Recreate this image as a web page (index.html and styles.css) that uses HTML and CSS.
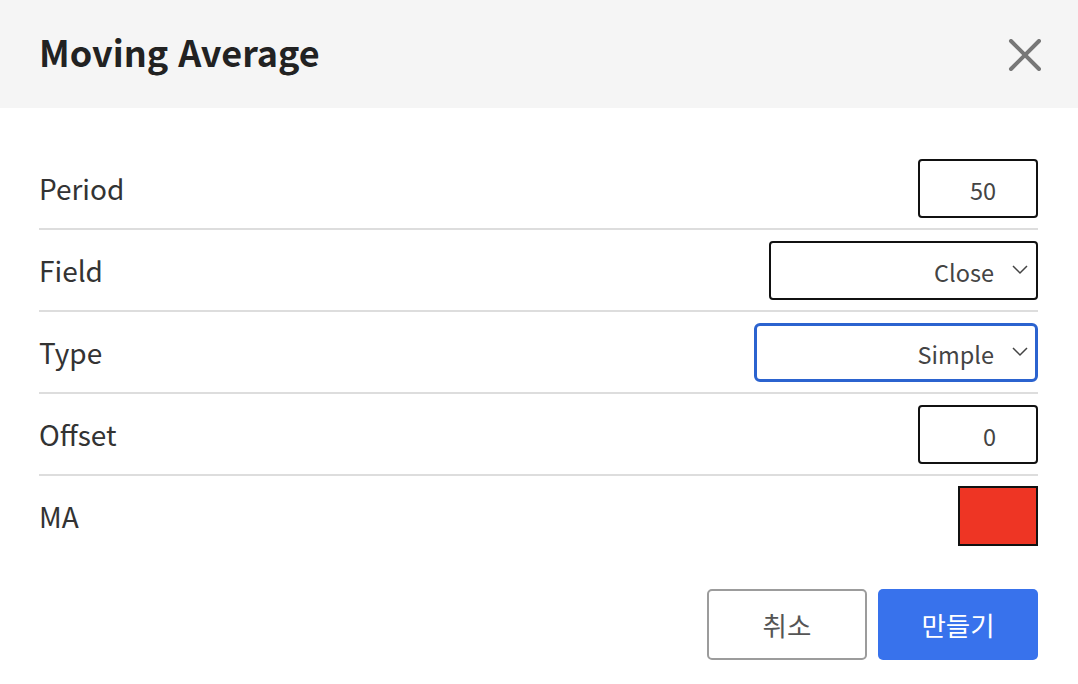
FILE: index.html
```html
<!DOCTYPE html>
<html lang="ko">
<head>
<meta charset="utf-8">
<link rel="stylesheet" href="styles.css">
</head>
<body>
<div class="dialog">
  <header class="head">
    <h1 class="title">Moving Average</h1>
    <button class="close" aria-label="close">
      <svg width="34" height="32" viewBox="0 0 34 32"><path d="M3 2 L31 30 M31 2 L3 30" stroke="#777" stroke-width="4" stroke-linecap="round" fill="none"/></svg>
    </button>
  </header>
  <div class="body">
    <div class="row">
      <span class="label">Period</span>
      <div class="input num"><span class="val">50</span></div>
    </div>
    <div class="row">
      <span class="label">Field</span>
      <div class="input select field"><span class="val">Close</span><svg class="chev" width="16" height="10" viewBox="0 0 16 10"><path d="M1 1 L8 8 L15 1" stroke="#444" stroke-width="1.5" fill="none"/></svg></div>
    </div>
    <div class="row">
      <span class="label">Type</span>
      <div class="input select type"><span class="val">Simple</span><svg class="chev" width="16" height="10" viewBox="0 0 16 10"><path d="M1 1 L8 8 L15 1" stroke="#444" stroke-width="1.5" fill="none"/></svg></div>
    </div>
    <div class="row">
      <span class="label">Offset</span>
      <div class="input num"><span class="val">0</span></div>
    </div>
    <div class="row last">
      <span class="label">MA</span>
      <div class="swatch"></div>
    </div>
    <div class="actions">
      <button class="btn cancel">취소</button>
      <button class="btn create">만들기</button>
    </div>
  </div>
</div>
</body>
</html>
```
FILE: styles.css
```css
html, body { margin: 0; padding: 0; background: #fff; }
body { font-family: "Noto Sans CJK KR", "Noto Sans", sans-serif; width: 1078px; height: 684px; overflow: hidden; }
.head {
  height: 108px; background: #f5f5f5;
  display: flex; align-items: center; justify-content: space-between;
  padding: 0 36px 0 39px; box-sizing: border-box;
}
.title { margin: 0; font-size: 36px; font-weight: 700; color: #222; line-height: 1; position: relative; top: -3px; }
.close { background: none; border: 0; padding: 0; margin: 0; display: flex; cursor: pointer; position: relative; top: 1px; }
.body { padding: 40px 40px 0 39px; }
.row {
  height: 80px; border-bottom: 2px solid #ddd;
  display: flex; align-items: center; justify-content: space-between;
}
.row.last { border-bottom: 0; }
.label { font-size: 28px; color: #333; }
.input {
  box-sizing: border-box; height: 59px; border: 2px solid #111; border-radius: 4px;
  display: flex; align-items: center; justify-content: flex-end;
  font-size: 23.5px; color: #444;
}
.val { position: relative; top: 2px; }
.num { width: 120px; padding-right: 40px; }
.select { padding-right: 8px; }
.select .chev { margin-left: 18px; }
.field { width: 269px; }
.type { width: 284px; border: 3px solid #2b63cf; border-radius: 6px; padding-right: 7px; }
.swatch { width: 80px; height: 60px; box-sizing: border-box; border: 2px solid #111; background: #ee3524; }
.actions { display: flex; justify-content: flex-end; gap: 11px; margin-top: 33px; }
.btn {
  width: 160px; height: 71px; box-sizing: border-box; border-radius: 5px;
  font-family: inherit; font-size: 26.5px; cursor: pointer;
}
.cancel { background: #fff; border: 2px solid #9c9c9c; color: #555; }
.create { background: #3872ec; border: 0; color: #fff; }
```
